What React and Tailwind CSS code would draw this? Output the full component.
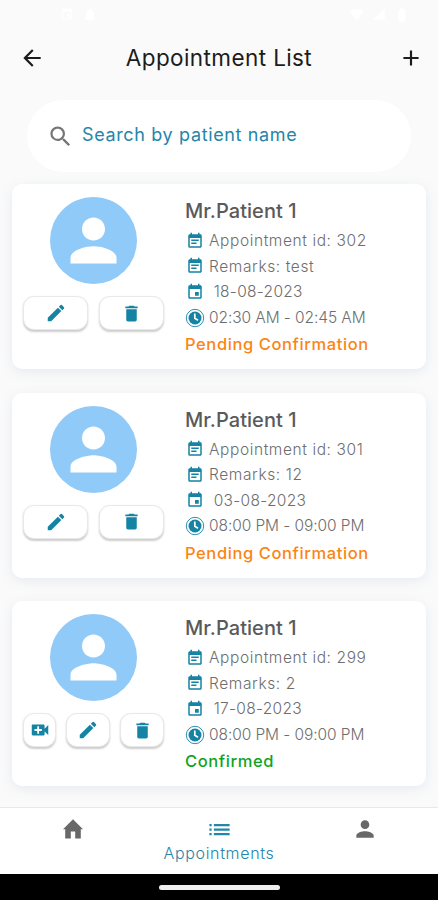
import {
  MdAdd,
  MdArrowBack,
  MdBatteryFull,
  MdDelete,
  MdEdit,
  MdEvent,
  MdEventNote,
  MdList,
  MdNotifications,
  MdPerson,
  MdSearch,
  MdSignalCellular4Bar,
  MdSignalWifi4Bar,
  MdVideoCall,
} from 'react-icons/md'

const APPOINTMENTS = [
  { id: 302, name: 'Mr.Patient 1', remarks: 'test', date: '18-08-2023', time: '02:30 AM - 02:45 AM', status: 'pending' },
  { id: 301, name: 'Mr.Patient 1', remarks: '12', date: '03-08-2023', time: '08:00 PM - 09:00 PM', status: 'pending' },
  { id: 299, name: 'Mr.Patient 1', remarks: '2', date: '17-08-2023', time: '08:00 PM - 09:00 PM', status: 'confirmed' },
]

// Solid clock face inside a thin outer ring
function ClockIcon() {
  return (
    <svg width="20" height="20" viewBox="0 0 20 20" fill="none" className="shrink-0">
      <circle cx="10" cy="10" r="8.7" stroke="#1583a3" strokeWidth="0.9" />
      <circle cx="10" cy="10" r="6.5" fill="#1583a3" />
      <path d="M9.8 5.6v4.6l3.2 2" stroke="#fff" strokeWidth="1.7" />
    </svg>
  )
}

function HomeIcon() {
  return (
    <svg width="20" height="20" viewBox="0 0 20 20" fill="currentColor" className="mt-[3px]">
      <path d="M10 .2 0 10.2h2.2v9.3h5.6v-7h4.4v7h5.6v-9.3H20L10 .2z" />
    </svg>
  )
}

function IconButton({ className, children }) {
  return (
    <button
      className={`flex h-[34px] items-center justify-center rounded-[11px] border border-[#e9e9e9] bg-white text-[#1583a3] shadow-[0_1.5px_2px_rgba(0,0,0,0.2)] ${className}`}
    >
      {children}
    </button>
  )
}

function DetailRow({ icon, children, className = 'tracking-[0.6px]' }) {
  return (
    <div className="flex h-[25.6px] items-center">
      <span className="flex w-[19px] shrink-0 justify-center text-[#1583a3]">{icon}</span>
      <span className={`ml-[5px] text-[15.5px] font-light whitespace-pre text-[#6e6e6e] ${className}`}>{children}</span>
    </div>
  )
}

function AppointmentCard({ item }) {
  const confirmed = item.status === 'confirmed'

  return (
    <div className="flex h-[185px] rounded-[10px] bg-white shadow-[0_3px_12px_rgba(90,130,180,0.13)]">
      {/* Avatar + actions */}
      <div className="ml-[11px] flex w-[141px] shrink-0 flex-col items-center pt-[13px]">
        <div className="flex size-[87px] items-center justify-center rounded-full bg-[#90caf9] text-white">
          <MdPerson size={69} />
        </div>
        {confirmed ? (
          <div className="mt-[12px] flex w-full justify-between">
            <IconButton className="w-[33px]"><MdVideoCall size={22} /></IconButton>
            <IconButton className="w-[44px]"><MdEdit size={22} /></IconButton>
            <IconButton className="w-[44px]"><MdDelete size={21} /></IconButton>
          </div>
        ) : (
          <div className="mt-[12px] flex w-full justify-between">
            <IconButton className="w-[65px]"><MdEdit size={22} /></IconButton>
            <IconButton className="w-[65px]"><MdDelete size={21} /></IconButton>
          </div>
        )}
      </div>

      {/* Details */}
      <div className="ml-[21px] pt-[13px]">
        <h2 className="h-[31px] text-[20px] leading-[29px] font-medium tracking-[0.05px] text-[#5a5a5a]">{item.name}</h2>
        <DetailRow icon={<MdEventNote size={18} />}>Appointment id: {item.id}</DetailRow>
        <DetailRow icon={<MdEventNote size={18} />}>Remarks: {item.remarks}</DetailRow>
        <DetailRow icon={<MdEvent size={18} />} className="tracking-[0.3px]">{' ' + item.date}</DetailRow>
        <DetailRow icon={<ClockIcon />} className="tracking-[-0.08px]">{item.time}</DetailRow>
        <p
          className={`text-[16.5px] leading-[29px] font-medium tracking-[0.6px] ${confirmed ? 'text-[#0ea51c]' : 'text-[#fb8514]'}`}
        >
          {confirmed ? 'Confirmed' : 'Pending Confirmation'}
        </p>
      </div>
    </div>
  )
}

export default function App() {
  return (
    <div className="flex h-[900px] w-[438px] flex-col overflow-hidden bg-[#fafafa] font-['Inter',sans-serif]">
      {/* Status bar, white on a near-white page */}
      <div className="flex h-[30px] shrink-0 items-center justify-between pr-[28px] pl-[60px] text-white">
        <div className="flex gap-[8px]">
          <MdEvent size={14} />
          <MdNotifications size={16} />
        </div>
        <div className="flex gap-[8px]">
          <MdSignalWifi4Bar size={15} />
          <MdSignalCellular4Bar size={14} />
          <MdBatteryFull size={16} />
        </div>
      </div>

      {/* Header */}
      <header className="mt-[3px] flex h-[49px] shrink-0 items-center justify-between pr-[14px] pl-[19px] text-[#1c1c1c]">
        <MdArrowBack size={26} />
        <h1 className="mr-[5px] text-[22.5px] font-normal tracking-[0.4px]">Appointment List</h1>
        <MdAdd size={26} />
      </header>

      {/* Search */}
      <div className="mx-[27px] mt-[18px] flex h-[72px] shrink-0 items-center rounded-[36px] bg-white pl-[20px]">
        <MdSearch size={27} className="text-[#757575]" />
        <span className="mb-[3px] ml-[8px] text-[18px] tracking-[0.64px] text-[#2586a9]">Search by patient name</span>
      </div>

      {/* List */}
      <main className="flex min-h-0 flex-1 flex-col gap-[23.5px] overflow-hidden px-[12px] pt-[12px]">
        {APPOINTMENTS.map((item) => (
          <AppointmentCard key={item.id} item={item} />
        ))}
      </main>

      {/* Bottom navigation */}
      <nav className="grid h-[67px] shrink-0 grid-cols-3 border-t border-[#e8e8e8] bg-white pt-[8px] text-[#686868]">
        <div className="flex flex-col items-center"><HomeIcon /></div>
        <div className="flex flex-col items-center text-[#2586a9]">
          <MdList size={27} />
          <span className="text-[16px] leading-[21px] font-light tracking-[0.65px]">Appointments</span>
        </div>
        <div className="flex flex-col items-center"><MdPerson size={26} /></div>
      </nav>
      <div className="flex h-[26px] shrink-0 justify-center bg-black pt-[11px]">
        <div className="h-[5px] w-[121px] rounded-full bg-[#eee]" />
      </div>
    </div>
  )
}
